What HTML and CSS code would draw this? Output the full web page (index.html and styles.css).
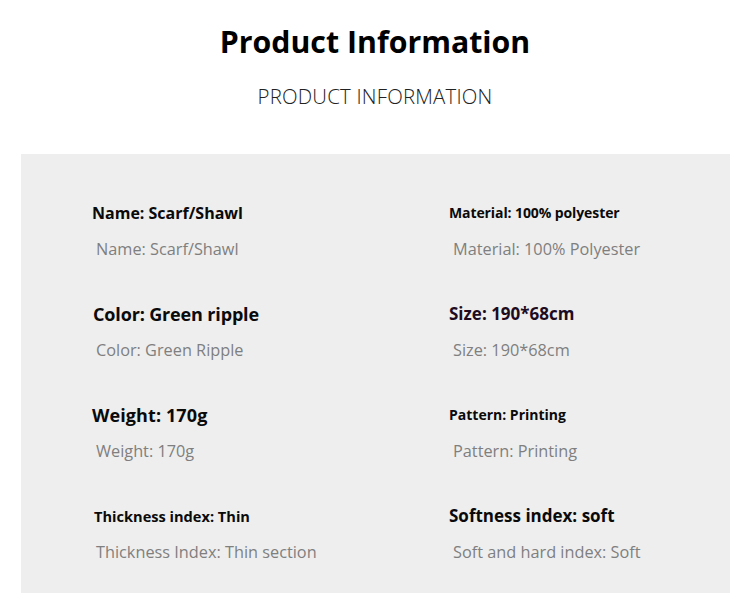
FILE: index.html
```html
<!DOCTYPE html>
<html>
<head>
<meta charset="utf-8">
<link rel="stylesheet" href="styles.css">
</head>
<body>
<header class="head">
  <h1 class="title">Product Information</h1>
  <p class="subtitle">PRODUCT INFORMATION</p>
</header>
<section class="panel">
  <div class="cell">
    <div class="label s16">Name: Scarf/Shawl</div>
    <div class="value">Name: Scarf/Shawl</div>
  </div>
  <div class="cell">
    <div class="label s14">Material: 100% polyester</div>
    <div class="value">Material: 100% Polyester</div>
  </div>
  <div class="cell">
    <div class="label s18 c1">Color: Green ripple</div>
    <div class="value">Color: Green Ripple</div>
  </div>
  <div class="cell">
    <div class="label s17 dark">Size: 190*68cm</div>
    <div class="value">Size: 190*68cm</div>
  </div>
  <div class="cell">
    <div class="label s18 wide">Weight: 170g</div>
    <div class="value">Weight: 170g</div>
  </div>
  <div class="cell">
    <div class="label s14 plain">Pattern: Printing</div>
    <div class="value">Pattern: Printing</div>
  </div>
  <div class="cell">
    <div class="label s15">Thickness index: Thin</div>
    <div class="value">Thickness Index: Thin section</div>
  </div>
  <div class="cell">
    <div class="label s17">Softness index: soft</div>
    <div class="value">Soft and hard index: Soft</div>
  </div>
</section>
</body>
</html>
```
FILE: styles.css
```css
* { box-sizing: border-box; }
html, body { margin: 0; padding: 0; background: #ffffff; }
body { font-family: "Open Sans", "Noto Sans", sans-serif; width: 750px; }
.head { display: flex; flex-direction: column; align-items: center; padding-top: 22px; height: 154px; }
.title { margin: 0; font-size: 30.3px; line-height: 40px; font-weight: 700; color: #000; }
.subtitle { margin: 20px 0 0; font-size: 20.4px; line-height: 28px; font-weight: 300; color: #222; letter-spacing: 0.2px; }
.panel {
  margin-left: 21px; width: 709px; height: 439px;
  background: #eeeeee;
  padding: 47px 0 29px 71px;
  display: grid; grid-template-columns: 357px 1fr;
  grid-auto-rows: 60px; row-gap: 41px;
}
.cell { display: flex; flex-direction: column; gap: 12px; }
.label { height: 24px; line-height: 24px; font-weight: 700; color: #0a0a0a; white-space: nowrap; }
.label.dark { color: #1e0c1e; }
.label.c1 { padding-left: 1px; }
.s14 { font-size: 14px; letter-spacing: -0.1px; }
.s14.plain { letter-spacing: 0; }
.s15 { font-size: 14.6px; padding-left: 2px; }
.s16 { font-size: 16px; }
.s17 { font-size: 17px; }
.s18 { font-size: 18px; letter-spacing: -0.15px; }
.s18.wide { letter-spacing: 0.1px; }
.value { height: 24px; line-height: 24px; font-size: 16.3px; color: #7f7f7f; padding-left: 4px; white-space: nowrap; }
```
